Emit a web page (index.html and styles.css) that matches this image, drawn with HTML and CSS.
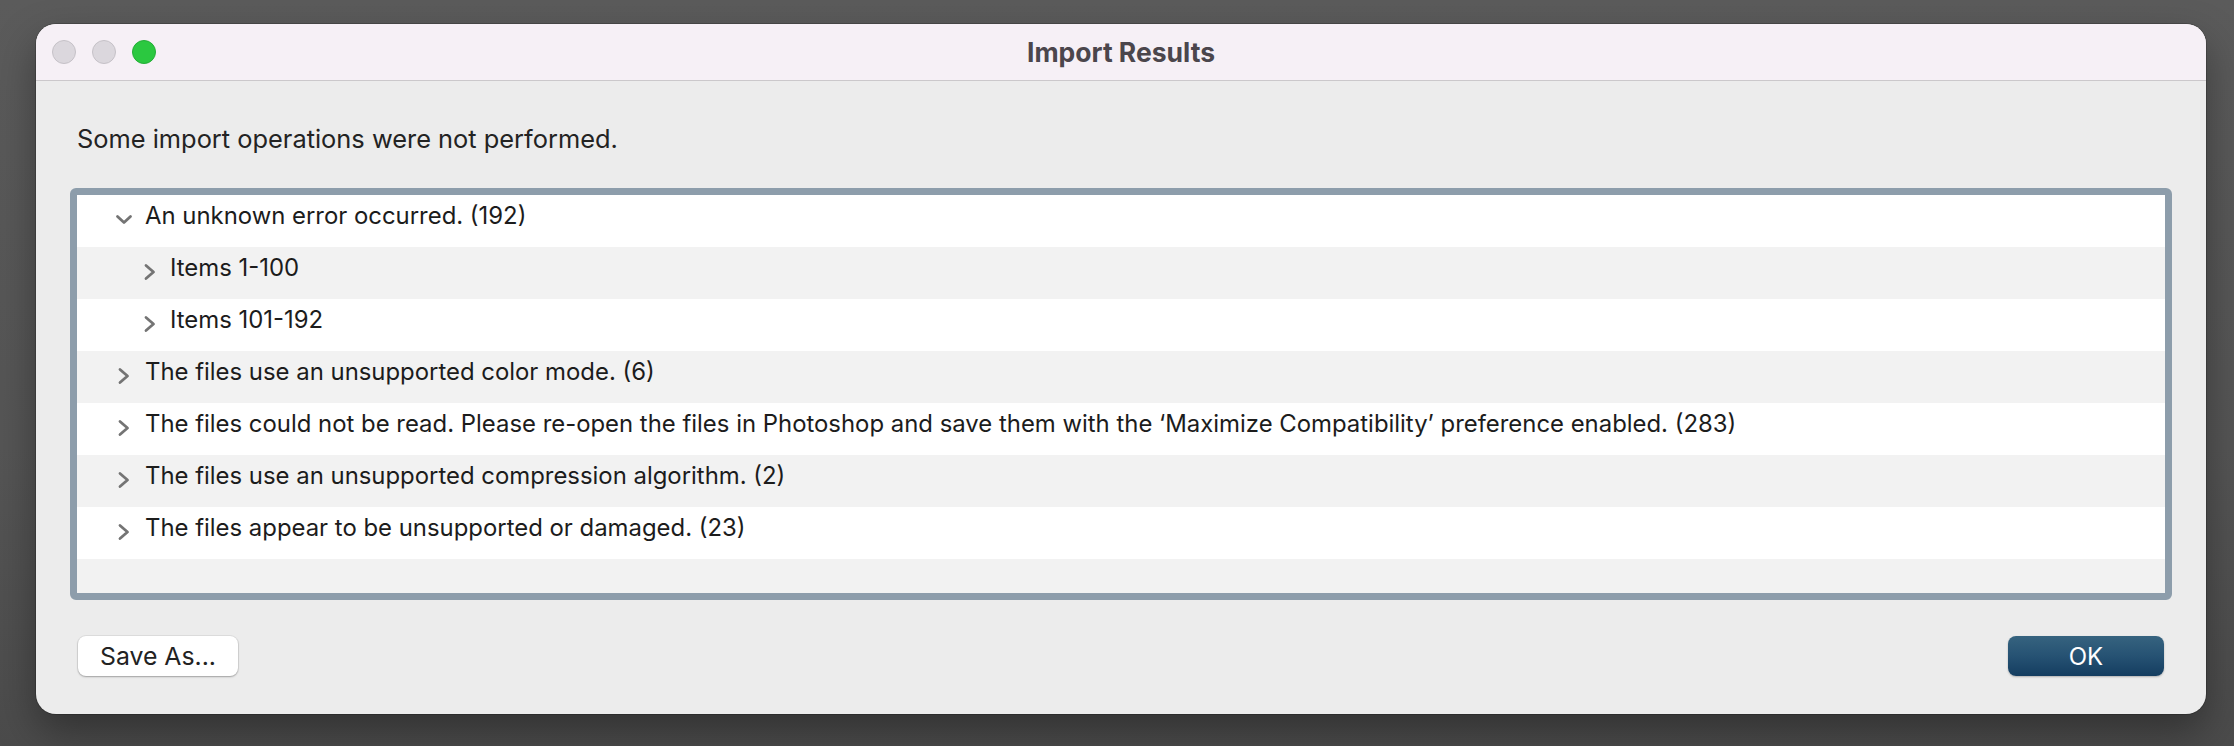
FILE: index.html
```html
<!DOCTYPE html>
<html>
<head>
<meta charset="utf-8">
<title>Import Results</title>
<link rel="stylesheet" href="styles.css">
</head>
<body>
<div class="window">
  <div class="titlebar">
    <div class="lights">
      <span class="light gray"></span>
      <span class="light gray"></span>
      <span class="light green"></span>
    </div>
    <div class="title">Import Results</div>
    <div></div>
  </div>
  <div class="content">
    <p class="message">Some import operations were not performed.</p>
    <div class="list">
      <div class="row white">
        <svg class="chev" viewBox="0 0 20 20"><polyline points="3.5,6.5 10,12.5 16.5,6.5"/></svg>
        <span class="label">An unknown error occurred. (192)</span>
      </div>
      <div class="row gray lvl1">
        <svg class="chev" viewBox="0 0 20 20"><polyline points="6,3.5 13.5,10 6,16.5"/></svg>
        <span class="label">Items 1-100</span>
      </div>
      <div class="row white lvl1">
        <svg class="chev" viewBox="0 0 20 20"><polyline points="6,3.5 13.5,10 6,16.5"/></svg>
        <span class="label">Items 101-192</span>
      </div>
      <div class="row gray">
        <svg class="chev" viewBox="0 0 20 20"><polyline points="6,3.5 13.5,10 6,16.5"/></svg>
        <span class="label">The files use an unsupported color mode. (6)</span>
      </div>
      <div class="row white">
        <svg class="chev" viewBox="0 0 20 20"><polyline points="6,3.5 13.5,10 6,16.5"/></svg>
        <span class="label">The files could not be read. Please re-open the files in Photoshop and save them with the ‘Maximize Compatibility’ preference enabled. (283)</span>
      </div>
      <div class="row gray">
        <svg class="chev" viewBox="0 0 20 20"><polyline points="6,3.5 13.5,10 6,16.5"/></svg>
        <span class="label">The files use an unsupported compression algorithm. (2)</span>
      </div>
      <div class="row white">
        <svg class="chev" viewBox="0 0 20 20"><polyline points="6,3.5 13.5,10 6,16.5"/></svg>
        <span class="label">The files appear to be unsupported or damaged. (23)</span>
      </div>
      <div class="filler"></div>
    </div>
    <div class="footer">
      <button class="btn save">Save As...</button>
      <button class="btn ok">OK</button>
    </div>
  </div>
</div>
</body>
</html>
```
FILE: styles.css
```css
html, body {
  margin: 0;
  padding: 0;
}
body {
  width: 2234px;
  height: 746px;
  overflow: hidden;
  background: linear-gradient(180deg, #5b5b5b 0%, #555555 60%, #4b4b4b 100%);
  font-family: "Inter", "Noto Sans", sans-serif;
}
.window {
  width: 2170px;
  height: 690px;
  margin: 24px 0 0 36px;
  border-radius: 20px;
  overflow: hidden;
  background: #ececec;
  box-shadow: 0 0 0 1px rgba(0,0,0,0.18), 0 18px 40px rgba(0,0,0,0.35);
  display: flex;
  flex-direction: column;
}
.titlebar {
  height: 56px;
  flex: 0 0 56px;
  background: #f6f0f6;
  border-bottom: 1px solid #cbc8cb;
  display: grid;
  grid-template-columns: 1fr auto 1fr;
  align-items: center;
}
.lights {
  display: flex;
  gap: 16px;
  padding-left: 16px;
}
.light {
  width: 24px;
  height: 24px;
  border-radius: 50%;
  box-sizing: border-box;
}
.light.gray {
  background: #dbd7dd;
  border: 1px solid #c5c1c7;
}
.light.green {
  background: #2bc840;
  border: 1px solid #24ad37;
}
.title {
  font-weight: 700;
  font-size: 26.5px;
  line-height: 56px;
  color: #4b464c;
}
.content {
  padding: 43px 34px 0 34px;
  display: flex;
  flex-direction: column;
}
.message {
  margin: 0 0 34px 7px;
  font-size: 25.4px;
  line-height: 30px;
  color: #232323;
}
.list {
  height: 412px;
  box-sizing: border-box;
  border: 7px solid #8d9dab;
  border-radius: 6px;
  background: #f2f2f2;
  display: flex;
  flex-direction: column;
}
.row {
  height: 52px;
  flex: 0 0 52px;
  box-sizing: border-box;
  display: flex;
  align-items: flex-start;
  padding-left: 37px;
}
.row.white { background: #ffffff; }
.row.gray { background: #f2f2f2; }
.row.lvl1 { padding-left: 63px; }
.chev {
  width: 20px;
  height: 20px;
  margin-top: 15px;
  flex: 0 0 20px;
  fill: none;
  stroke: #747474;
  stroke-width: 2.8;
  stroke-linecap: round;
  stroke-linejoin: round;
}
.label {
  margin-left: 11px;
  padding-top: 6px;
  font-size: 23.9px;
  line-height: 29px;
  color: #1c1c1c;
  white-space: nowrap;
}
.row.lvl1 .label { margin-left: 10px; }
.filler {
  flex: 1 1 auto;
  background: #f2f2f2;
}
.footer {
  margin-top: 36px;
  padding: 0 8px;
  display: flex;
  justify-content: space-between;
  align-items: center;
}
.btn {
  height: 40px;
  border: none;
  border-radius: 8px;
  font-family: "Inter", "Noto Sans", sans-serif;
  padding: 0;
  cursor: default;
}
.btn.save {
  width: 160px;
  background: #ffffff;
  color: #222222;
  font-size: 24.8px;
  box-shadow: 0 0 0 1px rgba(0,0,0,0.06), 0 1px 2px rgba(0,0,0,0.28);
}
.btn.ok {
  width: 156px;
  background: linear-gradient(180deg, #36637f 0%, #265273 50%, #143d60 100%);
  color: #ffffff;
  font-size: 24px;
  box-shadow: 0 1px 2px rgba(0,0,0,0.25);
}
```
